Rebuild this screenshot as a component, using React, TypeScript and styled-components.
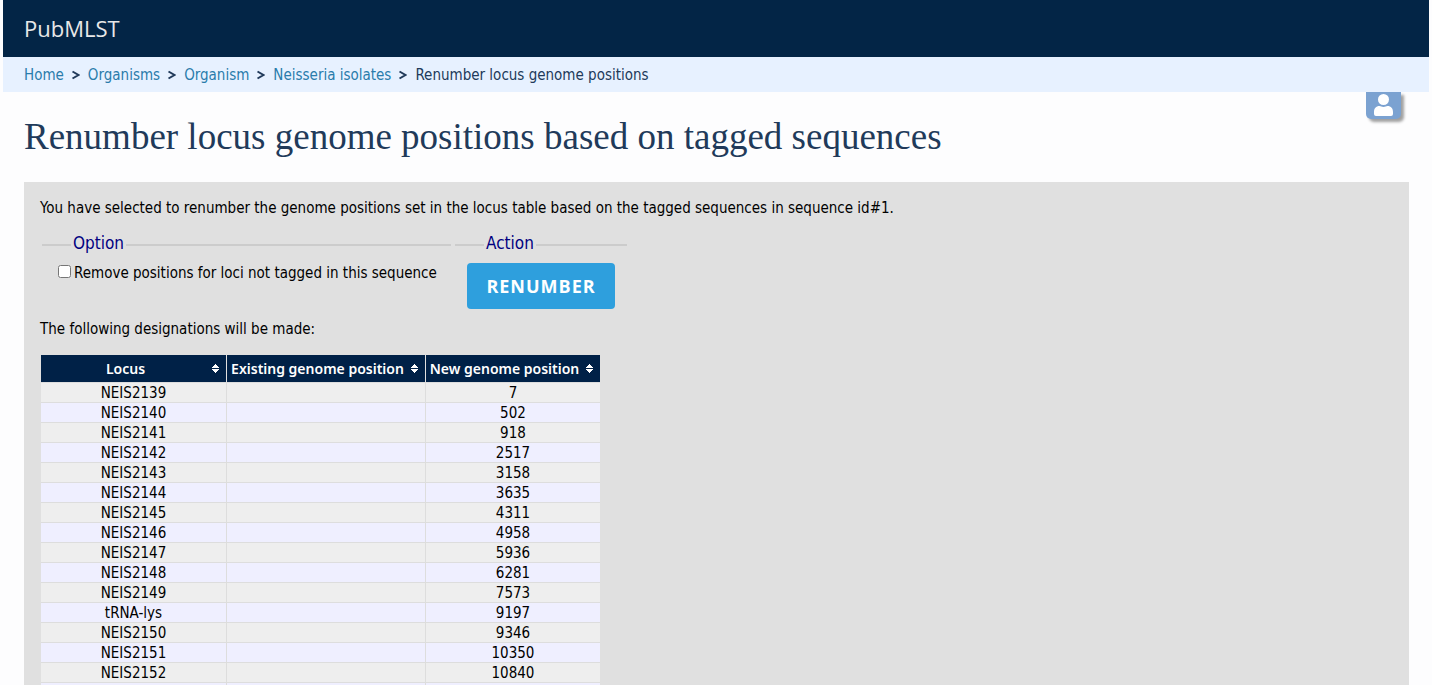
import React from "react";
import styled, { createGlobalStyle } from "styled-components";

const GlobalStyle = createGlobalStyle`
  * { box-sizing: border-box; }
  html { background: #fdfdfe; }
  body {
    margin: 0 3px;
    height: 100vh;
    overflow: hidden;
    color: #000;
    font: 15px/20px "DejaVu Sans Condensed", "Open Sans", sans-serif;
  }
`;

const Header = styled.header`
  display: flex;
  align-items: center;
  height: 57px;
  padding: 0 21px 2px;
  background: #032546;
  color: #e8e8e8;
  font-family: "Open Sans", "Noto Sans", sans-serif;
  font-size: 22px;
  line-height: 32px;
`;

const Breadcrumbs = styled.nav`
  position: relative;
  display: flex;
  align-items: center;
  gap: 8px;
  height: 35px;
  padding: 0 21px;
  background: #e7f1ff;
  color: #213a5a;
`;

const Crumb = styled.a`
  color: #2a7cab;
  text-decoration: none;
`;

const Separator = styled.span`
  display: flex;
  width: 8px;
`;

const UserButton = styled.button`
  position: absolute;
  top: 35px;
  right: 28px;
  display: flex;
  justify-content: center;
  width: 35px;
  height: 27px;
  padding: 2px 0 0;
  border: 0;
  border-radius: 0 0 5px 5px;
  background: #7ba2d1;
  box-shadow: 3px 3px 3px #a0a0a0;
  clip-path: inset(0 -10px -10px -10px);
`;

const Title = styled.h1`
  margin: 0;
  padding: 24px 21px;
  color: #213a5a;
  font: 400 37px/42px "Liberation Serif", serif;
`;

const Panel = styled.main`
  margin: 0 20px 0 21px;
  padding: 16px;
  background: #e0e0e0;
`;

const Paragraph = styled.p`
  margin: 0;
`;

const Form = styled.form`
  display: flex;
  align-items: flex-start;
  gap: 4px;
  margin: 15px 2px 10px;
`;

const Fieldset = styled.fieldset<{ $width: number }>`
  width: ${(p) => p.$width}px;
  min-width: 0;
  margin: 0;
  padding: 6px 12px 0;
  border: 0 solid #ccc;
  border-top-width: 2px;
`;

const Legend = styled.legend`
  margin-left: 17px;
  padding: 0 2px 4px;
  color: #000080;
  font-size: 17px;
  line-height: 20px;
`;

const CheckLabel = styled.label`
  display: flex;
  align-items: center;
  gap: 3px;
  padding-left: 4px;
  white-space: nowrap;
`;

const Checkbox = styled.input`
  width: 13px;
  height: 13px;
  margin: 0 0 3px;
`;

const Submit = styled.button`
  display: block;
  width: 148px;
  height: 46px;
  padding: 0;
  border: 0;
  border-radius: 4px;
  background: #2e9fdd;
  color: #fff;
  font: 700 18px/24px "Open Sans", "Noto Sans", sans-serif;
  letter-spacing: 1px;
`;

const Table = styled.table`
  width: 559px;
  margin: 16px 0 0 1px;
  border-spacing: 0;
  table-layout: fixed;
  text-align: center;
`;

const HeadCell = styled.th<{ $width: number }>`
  width: ${(p) => p.$width}px;
  height: 27px;
  padding: 0 7px 0 4px;
  background: #002147;
  color: #fff;
  font: 600 14px/20px "Noto Sans", "Open Sans", sans-serif;
  white-space: nowrap;
  & + & { border-left: 1px solid #e0e0e0; padding-left: 3px; }
`;

const HeadContent = styled.div`
  display: flex;
  align-items: center;
  gap: 6px;
`;

const HeadText = styled.span`
  flex: 1;
`;

const SortGlyph = styled.svg`
  flex: none;
`;

const Row = styled.tr`
  background: #eee;
  &:nth-child(even) { background: #efefff; }
`;

const Cell = styled.td`
  height: 20px;
  padding: 2px 0 0;
  border-top: 1px solid #ddd;
  line-height: 17px;
  & + & { border-left: 1px solid #ddd; }
`;

const columns = [
  { name: "Locus", width: 185 },
  { name: "Existing genome position", width: 199 },
  { name: "New genome position", width: 175 },
];

const loci: [string, string][] = [
  ["NEIS2139", "7"],
  ["NEIS2140", "502"],
  ["NEIS2141", "918"],
  ["NEIS2142", "2517"],
  ["NEIS2143", "3158"],
  ["NEIS2144", "3635"],
  ["NEIS2145", "4311"],
  ["NEIS2146", "4958"],
  ["NEIS2147", "5936"],
  ["NEIS2148", "6281"],
  ["NEIS2149", "7573"],
  ["tRNA-lys", "9197"],
  ["NEIS2150", "9346"],
  ["NEIS2151", "10350"],
  ["NEIS2152", "10840"],
  ["", ""],
];

const crumbs = ["Home", "Organisms", "Organism", "Neisseria isolates"];

const SortIcon = () => (
  <SortGlyph width="7" height="9" viewBox="0 0 7 9" fill="#fff" aria-hidden="true">
    <path d="M3 0h1v1h1v1h1v1h1v1H0V3h1V2h1V1h1zM0 5h7v1H6v1H5v1H4v1H3V8H2V7H1V6H0z" />
  </SortGlyph>
);

const Chevron = () => (
  <Separator aria-hidden="true">
    <svg width="8" height="10" viewBox="0 0 8 10" fill="none" stroke="#213a5a" strokeWidth="2">
      <path d="M0.5 1.5L6.5 5L0.5 8.5" />
    </svg>
  </Separator>
);

export default function App() {
  return (
    <>
      <GlobalStyle />
      <Header>PubMLST</Header>
      <Breadcrumbs aria-label="Breadcrumb">
        {crumbs.map((c) => (
          <React.Fragment key={c}>
            <Crumb href="#">{c}</Crumb>
            <Chevron />
          </React.Fragment>
        ))}
        <span>Renumber locus genome positions</span>
        <UserButton type="button" aria-label="User">
          <svg width="19" height="22" viewBox="0 0 19 22" fill="#fff" aria-hidden="true">
            <circle cx="9.5" cy="5.5" r="5.5" />
            <path d="M5.500 12C7 12 7.500 13 9.500 13S12 12 13.500 12C17 12 19 14.500 19 18V20Q19 22 17 22H2Q0 22 0 20V18C0 14.500 2 12 5.500 12Z" />
          </svg>
        </UserButton>
      </Breadcrumbs>
      <Title>Renumber locus genome positions based on tagged sequences</Title>
      <Panel>
        <Paragraph>
          You have selected to renumber the genome positions set in the locus table based on the
          tagged sequences in sequence id#1.
        </Paragraph>
        <Form onSubmit={(e) => e.preventDefault()}>
          <Fieldset $width={409}>
            <Legend>Option</Legend>
            <CheckLabel>
              <Checkbox type="checkbox" />
              Remove positions for loci not tagged in this sequence
            </CheckLabel>
          </Fieldset>
          <Fieldset $width={172}>
            <Legend>Action</Legend>
            <Submit type="submit">RENUMBER</Submit>
          </Fieldset>
        </Form>
        <Paragraph>The following designations will be made:</Paragraph>
        <Table>
          <thead>
            <tr>
              {columns.map((c) => (
                <HeadCell key={c.name} $width={c.width} scope="col">
                  <HeadContent>
                    <HeadText>{c.name}</HeadText>
                    <SortIcon />
                  </HeadContent>
                </HeadCell>
              ))}
            </tr>
          </thead>
          <tbody>
            {loci.map(([name, position]) => (
              <Row key={name}>
                <Cell>{name}</Cell>
                <Cell />
                <Cell>{position}</Cell>
              </Row>
            ))}
          </tbody>
        </Table>
      </Panel>
    </>
  );
}
